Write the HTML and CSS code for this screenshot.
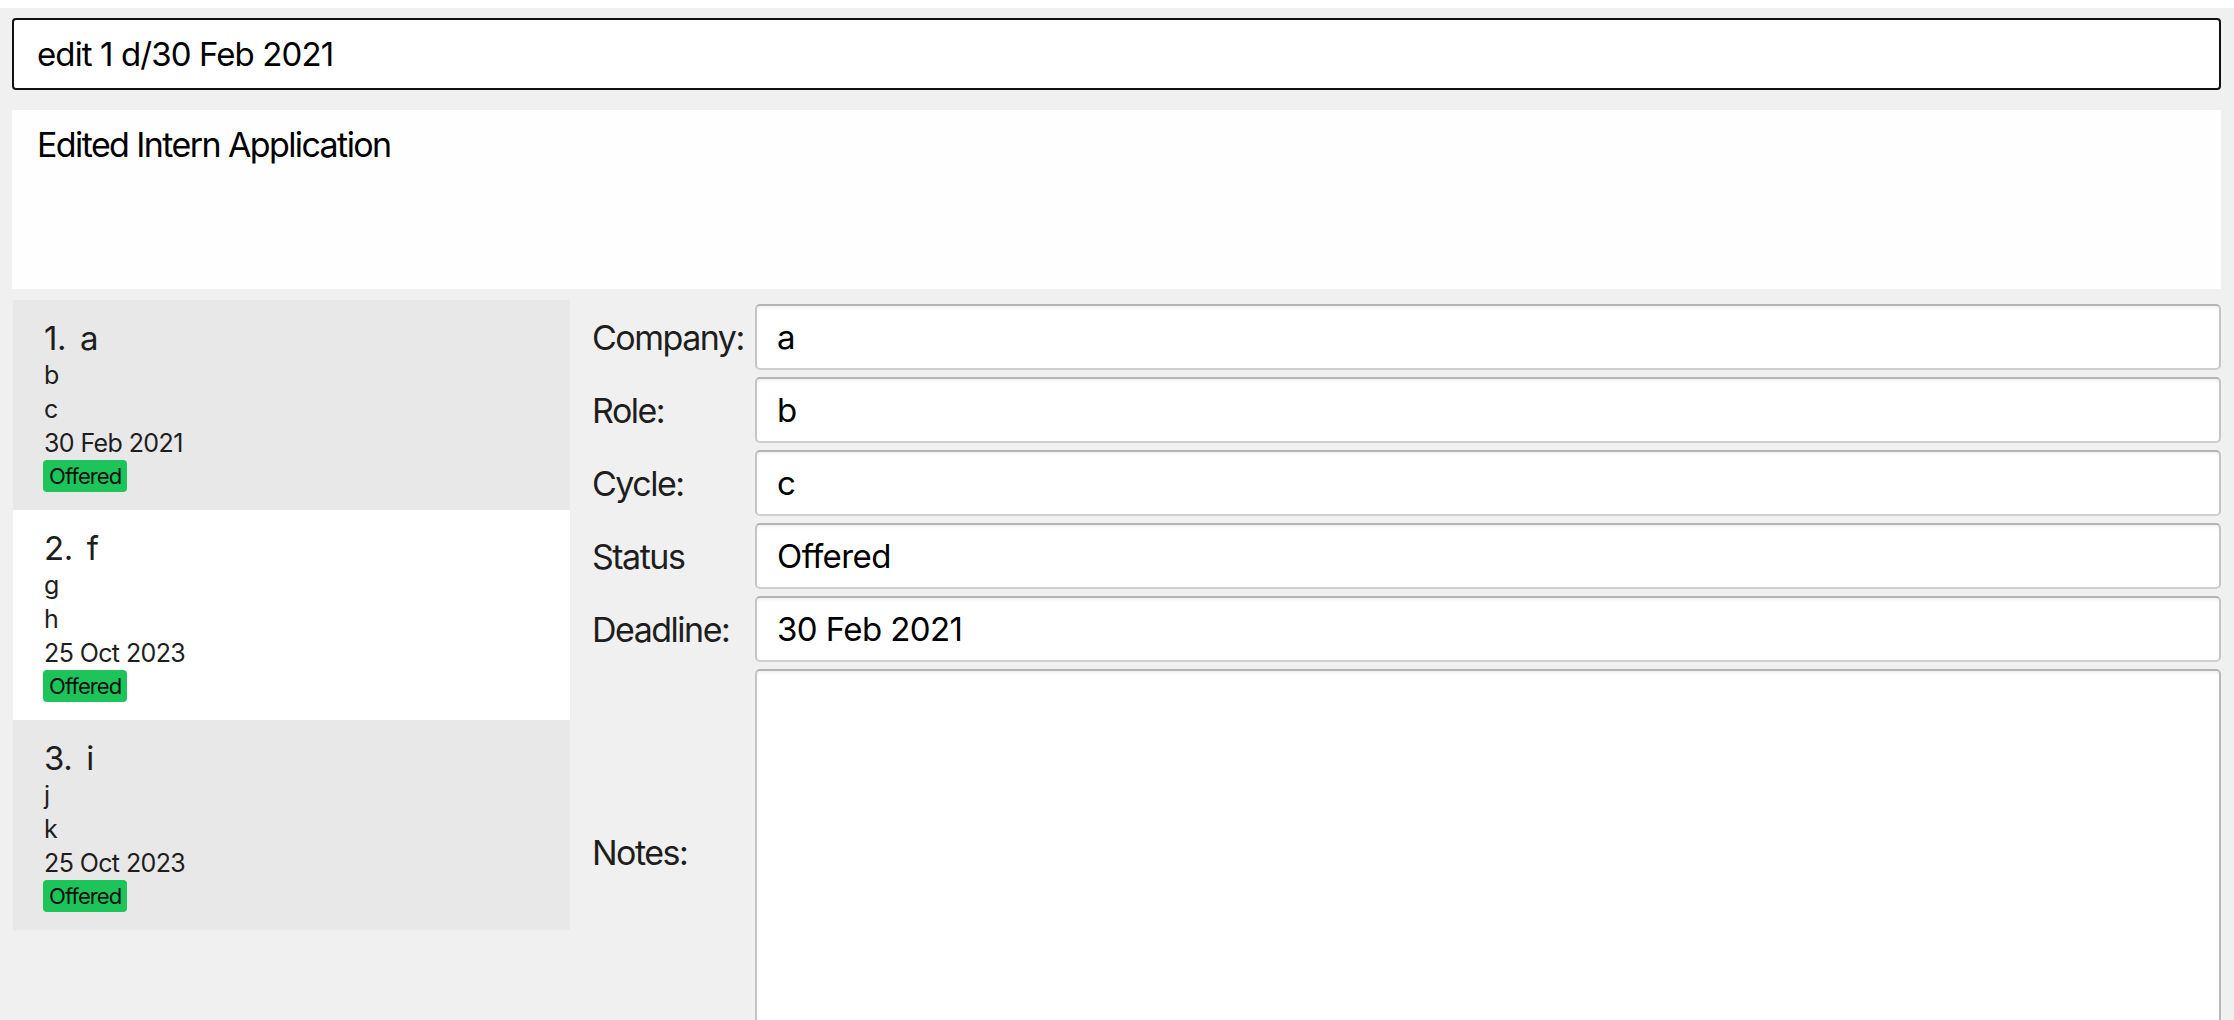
FILE: index.html
```html
<!DOCTYPE html>
<html lang="en">
<head>
<meta charset="utf-8">
<title>Intern Applications</title>
<link rel="stylesheet" href="styles.css">
</head>
<body>
<div class="topbar"></div>
<div class="app">
  <div class="command-box">edit 1 d/30 Feb 2021</div>
  <div class="result-box">Edited Intern Application</div>
  <div class="main">
    <div class="list">
      <div class="card card-alt">
        <div class="title"><span class="idx">1.</span><span>a</span></div>
        <div class="line">b</div>
        <div class="line">c</div>
        <div class="line">30 Feb 2021</div>
        <div class="badge">Offered</div>
      </div>
      <div class="card">
        <div class="title"><span class="idx">2.</span><span>f</span></div>
        <div class="line">g</div>
        <div class="line">h</div>
        <div class="line">25 Oct 2023</div>
        <div class="badge">Offered</div>
      </div>
      <div class="card card-alt">
        <div class="title"><span class="idx">3.</span><span>i</span></div>
        <div class="line">j</div>
        <div class="line">k</div>
        <div class="line">25 Oct 2023</div>
        <div class="badge">Offered</div>
      </div>
    </div>
    <div class="form">
      <div class="label">Company:</div>
      <div class="field">a</div>
      <div class="label">Role:</div>
      <div class="field">b</div>
      <div class="label">Cycle:</div>
      <div class="field">c</div>
      <div class="label">Status</div>
      <div class="field">Offered</div>
      <div class="label">Deadline:</div>
      <div class="field">30 Feb 2021</div>
      <div class="label">Notes:</div>
      <div class="field notes"></div>
    </div>
  </div>
</div>
</body>
</html>
```

FILE: styles.css
```css
html, body {
  margin: 0;
  padding: 0;
  height: 100%;
  overflow: hidden;
}

body {
  background: #f0f0f0;
  font-family: Inter, "Liberation Sans", sans-serif;
  color: #1e1e1e;
}

.topbar {
  height: 8px;
  background: #ffffff;
}

.app {
  padding: 10px 13px 0 12px;
}

.command-box {
  box-sizing: border-box;
  height: 72px;
  border: 2px solid #111;
  border-radius: 4px;
  background: #fff;
  display: flex;
  align-items: center;
  padding-left: 23px;
  font-size: 33px;
  letter-spacing: -0.9px;
  color: #000;
}

.result-box {
  box-sizing: border-box;
  margin-top: 20px;
  height: 179px;
  background: #fefefe;
  padding: 14px 25px;
  font-size: 34px;
  line-height: 41px;
  letter-spacing: -1.6px;
  color: #000;
}

.main {
  margin-top: 11px;
  display: flex;
  align-items: flex-start;
}

.list {
  width: 557px;
  margin-left: 1px;
  flex: none;
}

.card {
  box-sizing: border-box;
  height: 210px;
  background: #ffffff;
  padding: 18px 0 0 31px;
  display: flex;
  flex-direction: column;
  align-items: flex-start;
}

.card-alt {
  background: #e8e8e8;
}

.title {
  font-size: 33px;
  line-height: 40px;
  display: flex;
  gap: 14px;
  letter-spacing: -0.5px;
}

.line {
  font-size: 25px;
  line-height: 34px;
  letter-spacing: -0.6px;
}

.badge {
  margin-left: -1px;
  height: 32px;
  line-height: 32px;
  font-size: 22px;
  padding: 0 6px;
  border-radius: 4px;
  background: #1cc45a;
  color: #111;
  letter-spacing: -0.9px;
}

.form {
  flex: 1;
  padding: 4px 0 0 22px;
  display: grid;
  grid-template-columns: 163px 1fr;
  row-gap: 7px;
  align-items: center;
}

.label {
  font-size: 34px;
  letter-spacing: -1.5px;
  color: #1e1e1e;
}

.field {
  box-sizing: border-box;
  height: 66px;
  background: #fff;
  border: 2px solid #c4c4c4;
  border-top-color: #b4b4b4;
  border-bottom-color: #cfcfcf;
  border-radius: 5px;
  box-shadow: inset 0 4px 4px -3px rgba(0, 0, 0, 0.08);
  padding-left: 20px;
  display: flex;
  align-items: center;
  font-size: 33px;
  letter-spacing: -0.6px;
  color: #000;
}

.notes {
  height: 366px;
  border-right-color: #b8b8b8;
}
```
